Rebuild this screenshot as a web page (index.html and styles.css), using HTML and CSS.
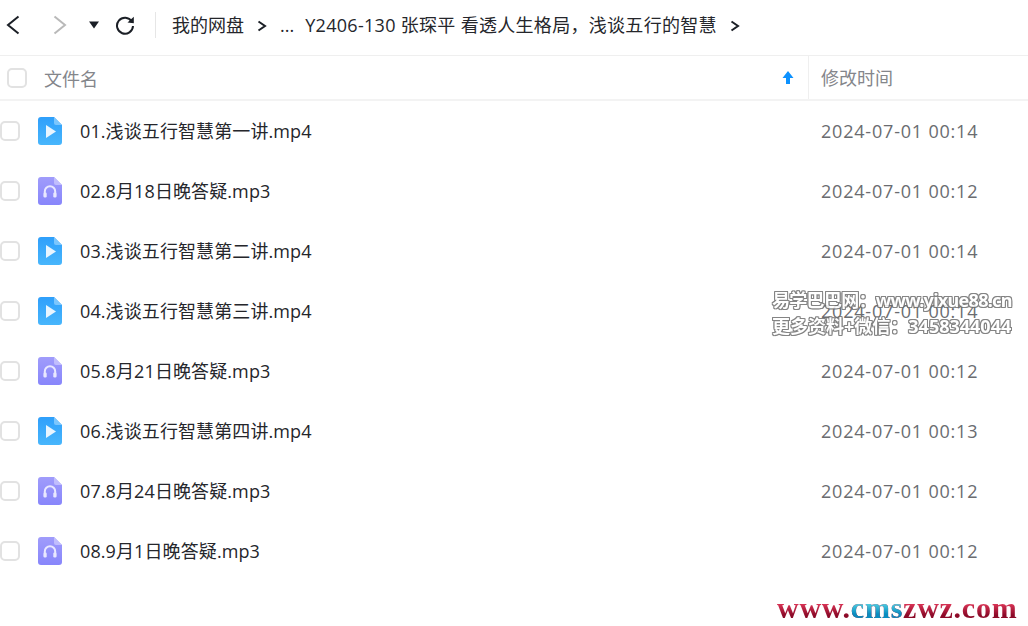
FILE: index.html
```html
<!DOCTYPE html>
<html lang="zh-CN">
<head>
    <meta charset="UTF-8">
    <title>我的网盘</title>
    <link rel="stylesheet" href="styles.css">
</head>
<body>
    <svg class="svg-defs" width="0" height="0">
        <defs>
            <linearGradient id="grad-video" x1="0" y1="0" x2="0" y2="1">
                <stop offset="0" stop-color="#2f9ffb"/>
                <stop offset="1" stop-color="#48b6fc"/>
            </linearGradient>
            <linearGradient id="grad-audio" x1="0" y1="0" x2="0" y2="1">
                <stop offset="0" stop-color="#a09cfb"/>
                <stop offset="1" stop-color="#8886fb"/>
            </linearGradient>
        </defs>
        <symbol id="icon-video" viewBox="0 0 24 28">
            <path d="M3 0H16L24 8V25a3 3 0 0 1-3 3H3a3 3 0 0 1-3-3V3a3 3 0 0 1 3-3z" fill="url(#grad-video)"/>
            <path d="M16 0L24 8H18a2 2 0 0 1-2-2z" fill="#7cc6fd"/>
            <path d="M8 8L18 14.500L8 21z" fill="#e8f5ff"/>
        </symbol>
        <symbol id="icon-audio" viewBox="0 0 24 28">
            <path d="M3 0H16L24 8V25a3 3 0 0 1-3 3H3a3 3 0 0 1-3-3V3a3 3 0 0 1 3-3z" fill="url(#grad-audio)"/>
            <path d="M16 0L24 8H18a2 2 0 0 1-2-2z" fill="#c0bdfd"/>
            <path d="M6.800 19v-4.500a5.200 5.200 0 0 1 10.400 0V19" fill="none" stroke="#e9e8ff" stroke-width="2"/>
            <rect x="5.500" y="15.500" width="3.200" height="5" rx="1.200" fill="#e9e8ff"/>
            <rect x="15.300" y="15.500" width="3.200" height="5" rx="1.200" fill="#e9e8ff"/>
        </symbol>
    </svg>

    <div class="page">
        <header class="toolbar">
            <div class="nav-btns">
                <svg class="nav-back" width="16" height="24" viewBox="0 0 16 24"><path d="M13.500 3.500L3 12l10.500 8.500" fill="none" stroke="#1b1f26" stroke-width="2"/></svg>
                <svg class="nav-forward" width="16" height="24" viewBox="0 0 16 24"><path d="M2.500 3.500L13 12 2.500 20.500" fill="none" stroke="#b9b9b9" stroke-width="2"/></svg>
                <svg class="nav-drop" width="12" height="10" viewBox="0 0 12 10"><path d="M1 1.500h10L6 8.500z" fill="#1b1f26"/></svg>
                <svg class="nav-refresh" width="20" height="20" viewBox="0 0 20 20"><path d="M16.800 6.500A8 8 0 1 0 18 11" fill="none" stroke="#1b1f26" stroke-width="2"/><path d="M12.500 7.500L18.800 8.300 18.800 1.800z" fill="#1b1f26"/></svg>
            </div>
            <div class="crumbs">
                <span>我的网盘</span>
                <svg class="crumb-arrow" width="10" height="12" viewBox="0 0 10 12"><path d="M1.500 1.500L8 6l-6.500 4.500" fill="none" stroke="#1b1f26" stroke-width="2"/></svg>
                <span class="crumb-more">...</span>
                <span class="crumb-title">Y2406-130 张琛平 看透人生格局，浅谈五行的智慧</span>
                <svg class="crumb-arrow" width="10" height="12" viewBox="0 0 10 12"><path d="M1.500 1.500L8 6l-6.500 4.500" fill="none" stroke="#1b1f26" stroke-width="2"/></svg>
            </div>
        </header>

        <div class="list-head">
            <span class="check head-check"></span>
            <span class="head-name">文件名</span>
            <svg class="sort-arrow" width="12" height="15" viewBox="0 0 12 15"><path d="M6 1L11.500 8H8V14H4V8H.5z" fill="#0d92ff"/></svg>
            <span class="head-time">修改时间</span>
        </div>

        <div class="row">
            <span class="check"></span>
            <svg class="file-icon" width="24" height="28"><use href="#icon-video"/></svg>
            <span class="file-name">01.浅谈五行智慧第一讲.mp4</span>
            <span class="file-time">2024-07-01 00:14</span>
        </div>
        <div class="row">
            <span class="check"></span>
            <svg class="file-icon" width="24" height="28"><use href="#icon-audio"/></svg>
            <span class="file-name">02.8月18日晚答疑.mp3</span>
            <span class="file-time">2024-07-01 00:12</span>
        </div>
        <div class="row">
            <span class="check"></span>
            <svg class="file-icon" width="24" height="28"><use href="#icon-video"/></svg>
            <span class="file-name">03.浅谈五行智慧第二讲.mp4</span>
            <span class="file-time">2024-07-01 00:14</span>
        </div>
        <div class="row">
            <span class="check"></span>
            <svg class="file-icon" width="24" height="28"><use href="#icon-video"/></svg>
            <span class="file-name">04.浅谈五行智慧第三讲.mp4</span>
            <span class="file-time">2024-07-01 00:14</span>
        </div>
        <div class="row">
            <span class="check"></span>
            <svg class="file-icon" width="24" height="28"><use href="#icon-audio"/></svg>
            <span class="file-name">05.8月21日晚答疑.mp3</span>
            <span class="file-time">2024-07-01 00:12</span>
        </div>
        <div class="row">
            <span class="check"></span>
            <svg class="file-icon" width="24" height="28"><use href="#icon-video"/></svg>
            <span class="file-name">06.浅谈五行智慧第四讲.mp4</span>
            <span class="file-time">2024-07-01 00:13</span>
        </div>
        <div class="row">
            <span class="check"></span>
            <svg class="file-icon" width="24" height="28"><use href="#icon-audio"/></svg>
            <span class="file-name">07.8月24日晚答疑.mp3</span>
            <span class="file-time">2024-07-01 00:12</span>
        </div>
        <div class="row">
            <span class="check"></span>
            <svg class="file-icon" width="24" height="28"><use href="#icon-audio"/></svg>
            <span class="file-name">08.9月1日晚答疑.mp3</span>
            <span class="file-time">2024-07-01 00:12</span>
        </div>
    </div>

    <!-- watermarks sit on top of the list -->
    <div class="mark-yixue">
        <div class="mark-line1">易学巴巴网：www.yixue88.cn</div>
        <div class="mark-line2">更多资料+微信：3458344044</div>
    </div>
    <div class="mark-site">www.<span class="mark-cyan">cms</span>zwz.com</div>
</body>
</html>
```

FILE: styles.css
```css
* {
    box-sizing: border-box;
}

html, body {
    margin: 0;
    padding: 0;
    height: 100%;
    overflow: hidden;
}

body {
    position: relative;
    background-color: #ffffff;
    color: #25262b;
    font-family: "Open Sans", "Noto Sans CJK SC", sans-serif;
    font-size: 18px;
}

.svg-defs {
    position: absolute;
}

/* Toolbar */
.toolbar {
    display: flex;
    align-items: center;
    height: 56px;
    border-bottom: 1px solid #efefef;
    padding-bottom: 5px;
}

.nav-btns {
    display: flex;
    align-items: center;
    width: 156px;
    height: 26px;
    padding-left: 5px;
    border-right: 1px solid #e6e6e6;
}

.nav-back {
    margin-right: 31px;
}

.nav-forward {
    margin-right: 20px;
}

.nav-drop {
    margin-right: 15px;
}

.crumbs {
    display: flex;
    align-items: center;
    padding-left: 16px;
    font-size: 18px;
    line-height: 24px;
    white-space: nowrap;
}

.crumb-arrow {
    margin: 2px 13px 0 13px;
}

.crumb-more {
    margin-right: 11px;
}

.crumb-title {
    letter-spacing: .3px;
}

/* List header */
.list-head {
    display: flex;
    align-items: center;
    height: 45px;
    border-bottom: 2px solid #f3f3f3;
    color: #84868b;
}

.head-check {
    margin-left: 7px;
}

.head-name {
    margin-left: 17px;
    flex: 1;
}

.sort-arrow {
    margin-right: 14px;
}

.head-time {
    width: 220px;
    height: 100%;
    padding-left: 12px;
    line-height: 44px;
    border-left: 1px solid #efefef;
}

/* File rows */
.row {
    display: flex;
    align-items: center;
    height: 60px;
}

.check {
    flex: none;
    width: 20px;
    height: 20px;
    border: 2px solid #e2e2e2;
    border-radius: 5px;
    background-color: #ffffff;
}

.file-icon {
    flex: none;
    margin-left: 18px;
}

.file-name {
    flex: 1;
    margin-left: 18px;
    margin-top: -2px;
    letter-spacing: .1px;
    white-space: nowrap;
}

.file-time {
    width: 207px;
    color: #6a6c70;
    letter-spacing: .8px;
    white-space: nowrap;
}

/* Watermarks */
.mark-yixue {
    position: absolute;
    top: 287px;
    left: 772px;
    font-family: "Noto Sans", "Noto Sans CJK SC", sans-serif;
    font-size: 18px;
    font-weight: bold;
    line-height: 26px;
    white-space: nowrap;
    color: #ffffff;
    opacity: .85;
    text-shadow: -1px 0 #6f6f6f, 1px 0 #6f6f6f, 0 -1px #6f6f6f, 0 1px #6f6f6f, 1px 1px #6f6f6f, -1px -1px #6f6f6f, 1px -1px #6f6f6f, -1px 1px #6f6f6f;
}

.mark-line1 {
    letter-spacing: -.7px;
}

.mark-line2 {
    letter-spacing: 0;
}

.mark-site {
    position: absolute;
    top: 590px;
    left: 777px;
    font-family: "Liberation Serif", serif;
    font-size: 30px;
    font-weight: bold;
    line-height: 36px;
    letter-spacing: .75px;
    background-image: linear-gradient(#ef3f62 30%, #8c0a28 70%);
    -webkit-background-clip: text;
    background-clip: text;
    color: transparent;
}

.mark-cyan {
    background-image: linear-gradient(#5fe0ea 30%, #0a8cc0 70%);
    -webkit-background-clip: text;
    background-clip: text;
    color: transparent;
}
```
